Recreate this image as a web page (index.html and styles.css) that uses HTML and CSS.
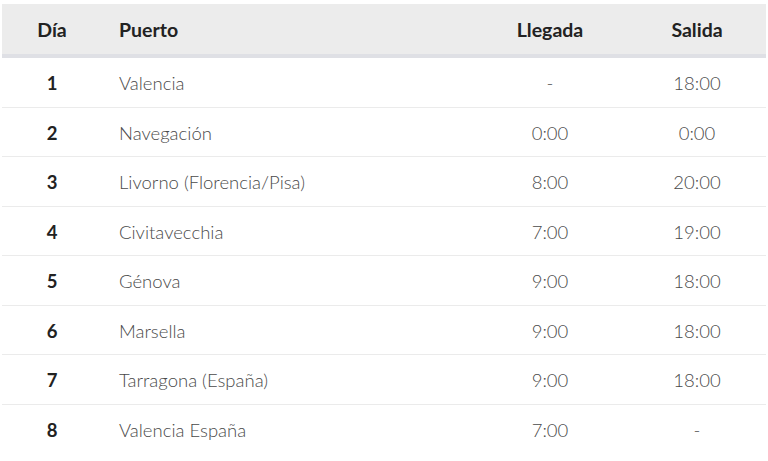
FILE: index.html
```html
<!DOCTYPE html>
<html lang="es">
<head>
<meta charset="utf-8">
<link rel="stylesheet" href="styles.css">
</head>
<body>
<table class="itinerary">
  <colgroup>
    <col class="c-day">
    <col class="c-port">
    <col class="c-arr">
    <col class="c-dep">
  </colgroup>
  <thead>
    <tr><th class="day">Día</th><th class="port">Puerto</th><th class="time">Llegada</th><th class="time">Salida</th></tr>
  </thead>
  <tbody>
    <tr><td class="day">1</td><td class="port">Valencia</td><td class="time">-</td><td class="time">18:00</td></tr>
    <tr><td class="day">2</td><td class="port">Navegación</td><td class="time">0:00</td><td class="time">0:00</td></tr>
    <tr><td class="day">3</td><td class="port">Livorno (Florencia/Pisa)</td><td class="time">8:00</td><td class="time">20:00</td></tr>
    <tr><td class="day">4</td><td class="port">Civitavecchia</td><td class="time">7:00</td><td class="time">19:00</td></tr>
    <tr><td class="day">5</td><td class="port">Génova</td><td class="time">9:00</td><td class="time">18:00</td></tr>
    <tr><td class="day">6</td><td class="port">Marsella</td><td class="time">9:00</td><td class="time">18:00</td></tr>
    <tr><td class="day">7</td><td class="port">Tarragona (España)</td><td class="time">9:00</td><td class="time">18:00</td></tr>
    <tr><td class="day">8</td><td class="port">Valencia España</td><td class="time">7:00</td><td class="time">-</td></tr>
  </tbody>
</table>
</body>
</html>
```
FILE: styles.css
```css
html, body {
  margin: 0;
  background: #ffffff;
}
body {
  padding: 4px 2px;
  font-family: Lato, "Open Sans", sans-serif;
}
.itinerary {
  width: 764px;
  border-collapse: collapse;
  table-layout: fixed;
  font-size: 18.5px;
}
.c-day { width: 100px; }
.c-port { width: 370px; }
.c-arr { width: 156px; }
.c-dep { width: 138px; }
.itinerary th {
  background: #ececec;
  color: #222;
  font-size: 19.5px;
  font-weight: 700;
  line-height: 26px;
  padding: 13px 0 11px;
  border-bottom: 4px solid #dfe0e5;
}
.itinerary td {
  color: #4a4a4a;
  font-weight: 300;
  line-height: 24.5px;
  padding: 13px 0 11px;
  border-bottom: 1px solid #ebebeb;
}
.itinerary tbody tr:last-child td {
  border-bottom: none;
}
.itinerary .day {
  text-align: center;
}
.itinerary td.day {
  color: #222;
  font-weight: 700;
}
.itinerary .port {
  text-align: left;
  padding-left: 17px;
}
.itinerary .time {
  text-align: center;
}
```
